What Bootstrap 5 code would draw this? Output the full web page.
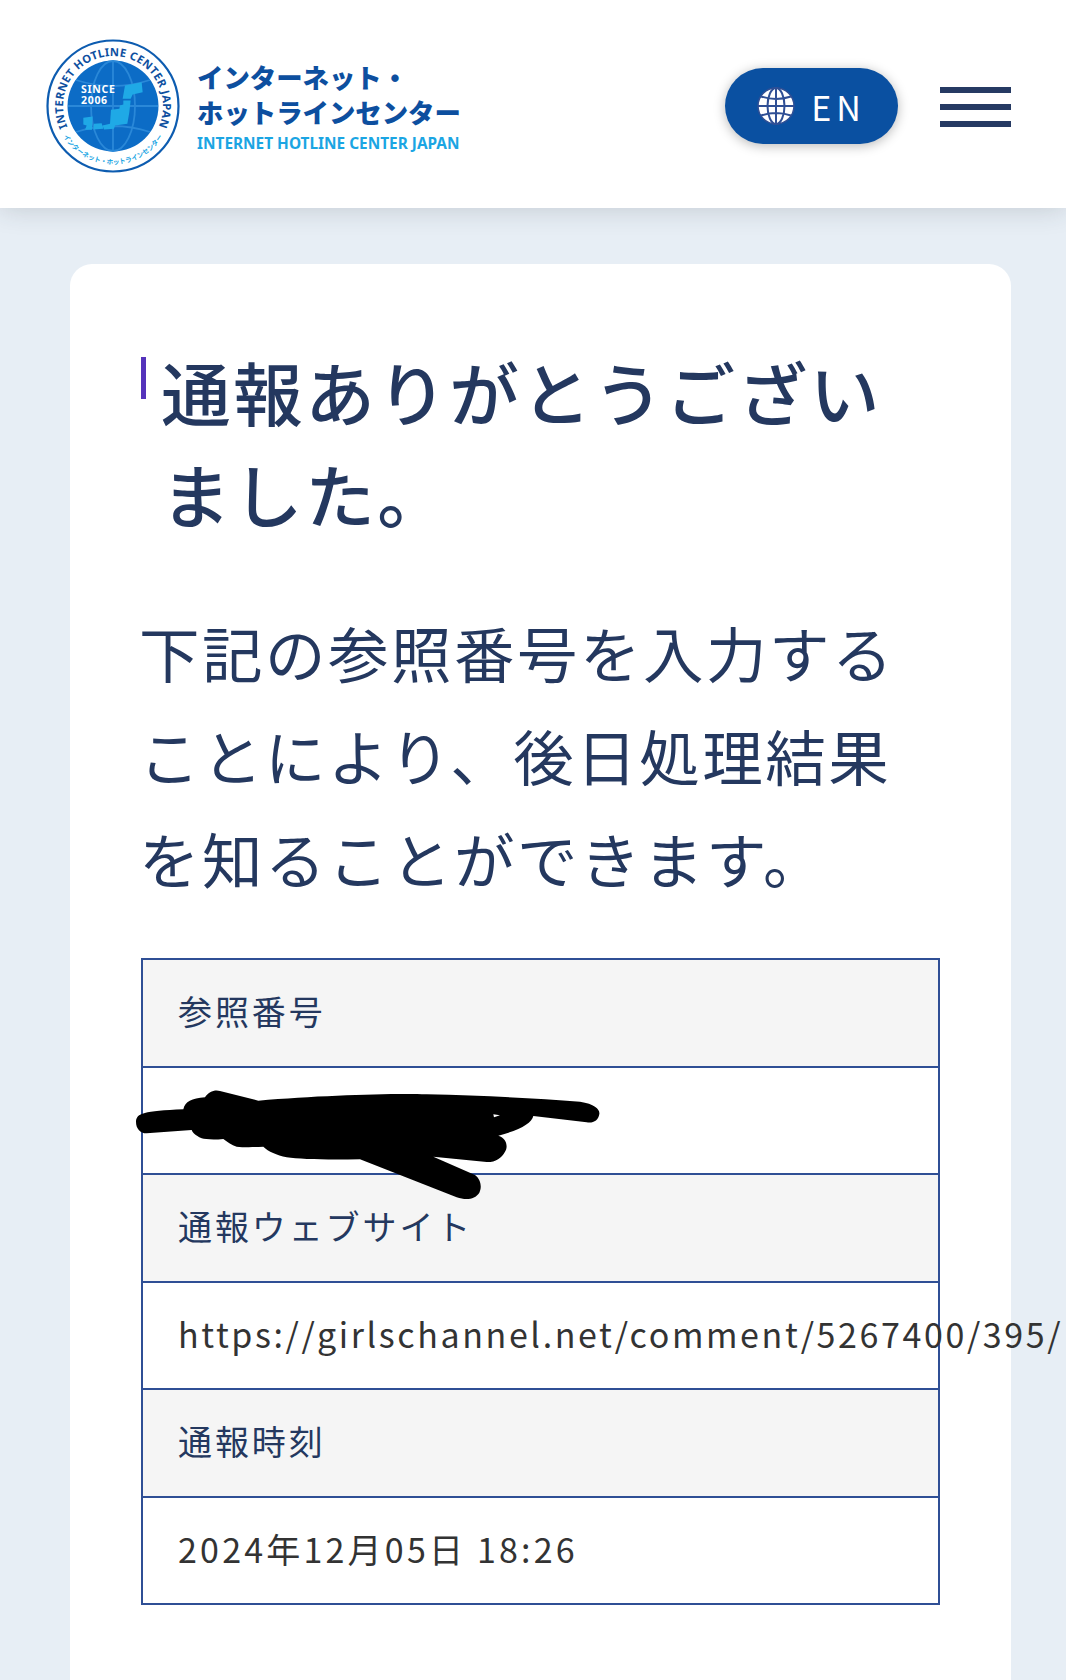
<!DOCTYPE html>
<html lang="ja">
<head>
    <meta charset="UTF-8" />
    <meta name="viewport" content="width=device-width, initial-scale=1" />
    <title>通報ありがとうございました</title>
    <link href="https://cdn.jsdelivr.net/npm/bootstrap@5.3.3/dist/css/bootstrap.min.css" rel="stylesheet" />
    <style>
        body {
            background: #e7eef5;
            color: #24385f;
            font-family: "Noto Sans CJK JP", "Noto Sans", sans-serif;
            overflow: hidden;
            height: 1680px;
        }

        .site-head {
            height: 208px;
            padding: 4px 55px 0 46px;
            background: #fff;
            box-shadow: 0 0 26px rgba(40, 50, 60, .2);
            position: relative;
        }

        .logo-name {
            color: #0d4f9f;
            font-weight: 900;
            line-height: 37px;
            margin: -2px 0 0 17px;
        }

        .logo-name div { white-space: nowrap; }
        .logo-l1, .logo-l2 { font-size: 26.4px; }
        .logo-l1 { padding-top: 2px; margin-bottom: -2px; }

        .logo-l3 {
            color: #1ba5e3;
            font-family: "Noto Sans", sans-serif;
            font-size: 15.4px;
            font-weight: 700;
            line-height: 22px;
            margin-top: 3px;
        }

        .lang-btn {
            width: 173px;
            height: 76px;
            margin-right: 42px;
            background: #0a50a1;
            border-radius: 38px;
            border: 0;
            color: #fff;
            font-size: 34px;
            letter-spacing: 5px;
            box-shadow: 0 2px 12px rgba(0, 0, 0, .28);
        }

        .lang-btn:hover { background: #0a50a1; color: #fff; }

        .burger { width: 71px; gap: 11px; margin-top: 2px; }
        .burger span { display: block; height: 6px; background: #263a63; }

        .page-main { padding: 56px 55px 0 70px; }

        .report-box {
            position: relative;
            background: #fff;
            border-radius: 22px;
            padding: 76px 71px 200px;
            min-height: 1500px;
        }

        .report-title {
            position: relative;
            margin: 0 0 56px;
            padding-left: 20px;
            font-size: 69.7px;
            font-weight: 500;
            line-height: 102px;
            letter-spacing: 2.4px;
        }

        .report-title::before {
            content: "";
            position: absolute;
            left: 0;
            top: 17px;
            width: 5px;
            height: 42px;
            background: #5533bb;
        }

        .report-lead {
            margin: 0 0 49px -2px;
            font-size: 60.5px;
            line-height: 103px;
            letter-spacing: 2.5px;
        }

        .report-table {
            table-layout: fixed;
            width: 100%;
            margin: 0;
            border: 2px solid #2f4f95;
        }

        .report-table td {
            height: 107.5px;
            padding: 0 0 4px 35px;
            border: 0;
            border-top: 2px solid #2f4f95;
            vertical-align: middle;
            color: #333;
            font-size: 34px;
            letter-spacing: 2.9px;
            white-space: nowrap;
            box-shadow: none;
        }

        .report-table tr:first-child td { border-top: 0; }

        .report-table tr.th-row td {
            background: #f5f5f5;
            color: #24385f;
        }

        .report-table td.url-cell { letter-spacing: 2.6px; }
        .report-table td.date-cell { letter-spacing: 3.2px; }

        .red-speck {
            position: absolute;
            left: 117px;
            top: 861px;
            width: 2px;
            height: 5px;
            background: #d5122a;
        }

        .scribble {
            position: absolute;
            left: 50px;
            top: 686px;
        }
    </style>
</head>
<body>

    <!-- Header -->
    <header class="site-head d-flex align-items-center">
        <a class="d-flex align-items-center text-decoration-none" href="#">
            <svg width="134" height="134" viewBox="0 0 134 134">
                <defs>
                    <path id="ringTop" d="M 67 117 A 50 50 0 0 1 67 17 A 50 50 0 0 1 67 117" />
                    <path id="ringBot" d="M 16 95 A 58 58 0 0 0 118 95" />
                </defs>
                <circle cx="67" cy="67" r="65.5" fill="#fff" stroke="#0d5cb0" stroke-width="2.2" />
                <circle cx="67" cy="67" r="45.5" fill="#0c6cc6" />
                <g fill="none" stroke="#2a88d8" stroke-width="1.8">
                    <ellipse cx="67" cy="67" rx="22" ry="45" />
                    <path d="M67 22v90M22 67h90M30 41q37 12 74 0M30 93q37-12 74 0" />
                </g>
                <g fill="#1fa9e6" transform="translate(-6 -8.5) scale(.3333)">
                    <path d="M255 165L305 155L308 185L278 192L272 205L248 205Z" />
                    <path d="M250 210L272 210L268 245L262 280L225 285L222 295L192 297L188 285L210 280L213 238L238 235L240 225L250 222Z" />
                    <path d="M162 280L185 278L190 295L160 297Z" />
                    <path d="M130 262L158 258L156 298L135 298L140 285L130 282Z" />
                </g>
                <text x="35" y="54" fill="#fff" font-family="Noto Sans, sans-serif" font-weight="700" font-size="10.5" letter-spacing=".7">SINCE</text>
                <text x="35" y="65" fill="#fff" font-family="Noto Sans, sans-serif" font-weight="700" font-size="10.5" letter-spacing=".7">2006</text>
                <text fill="#0d4f9f" font-family="Noto Sans, sans-serif" font-weight="700" font-size="11.2" letter-spacing=".3">
                    <textPath href="#ringTop" startOffset="50%" text-anchor="middle">INTERNET HOTLINE CENTER JAPAN</textPath>
                </text>
                <text fill="#1ba5e3" font-family="Noto Sans CJK JP, sans-serif" font-weight="700" font-size="6.6">
                    <textPath href="#ringBot" startOffset="50%" text-anchor="middle">インターネット・ホットラインセンター</textPath>
                </text>
            </svg>
            <div class="logo-name">
                <div class="logo-l1">インターネット・</div>
                <div class="logo-l2">ホットラインセンター</div>
                <div class="logo-l3">INTERNET HOTLINE CENTER JAPAN</div>
            </div>
        </a>
        <div class="ms-auto d-flex align-items-center">
            <a href="#" class="btn lang-btn d-flex align-items-center justify-content-center gap-3 p-0">
                <svg width="38" height="38" viewBox="0 0 38 38">
                    <circle cx="19" cy="19" r="18" fill="#fff" stroke="#2f4f95" stroke-width="1.5" />
                    <g fill="none" stroke="#2f4f95" stroke-width="2">
                        <ellipse cx="19" cy="19" rx="8.5" ry="18" />
                        <path d="M19 1v36M1 19h36M4 9.5q15 5 30 0M4 28.5q15-5 30 0" />
                    </g>
                </svg>
                <span>EN</span>
            </a>
            <div class="burger d-flex flex-column">
                <span></span>
                <span></span>
                <span></span>
            </div>
        </div>
    </header>

    <!-- Main content -->
    <main class="page-main">
        <div class="report-box">
            <h1 class="report-title">通報ありがとうございました。</h1>
            <p class="report-lead">下記の参照番号を入力することにより、後日処理結果を知ることができます。</p>

            <table class="table report-table">
                <tbody>
                    <tr class="th-row"><td>参照番号</td></tr>
                    <tr><td>&nbsp;</td></tr>
                    <tr class="th-row"><td>通報ウェブサイト</td></tr>
                    <tr><td class="url-cell">https://girlschannel.net/comment/5267400/395/</td></tr>
                    <tr class="th-row"><td>通報時刻</td></tr>
                    <tr><td class="date-cell">2024年12月05日 18:26</td></tr>
                </tbody>
            </table>

            <span class="red-speck"></span>
            <!-- blacked out by hand in the screenshot -->
            <svg class="scribble" width="500" height="280" viewBox="0 0 1500 840">
                <path fill="#000" d="M48 515C50 490 70 483 190 478C195 455 215 445 255 442C265 425 285 418 300 423L415 452C600 437 800 430 920 433C1100 437 1250 445 1380 455C1425 462 1440 478 1438 492C1435 512 1420 520 1400 517L1240 498C1235 520 1200 540 1135 557C1160 565 1165 590 1155 605C1145 625 1125 637 1100 636L940 620L1065 675C1085 690 1085 715 1078 728C1065 748 1040 752 1010 742L720 628C620 630 540 628 500 622C470 615 445 605 430 590C400 592 370 592 350 590C335 585 320 575 310 567C280 570 255 568 245 565C225 555 218 548 215 540L80 550C60 550 48 535 48 515Z" />
                <path fill="#fff" d="M1120 493l20 3-18 6z" />
            </svg>
        </div>
    </main>

    <script src="https://cdn.jsdelivr.net/npm/bootstrap@5.3.3/dist/js/bootstrap.bundle.min.js"></script>
</body>
</html>
